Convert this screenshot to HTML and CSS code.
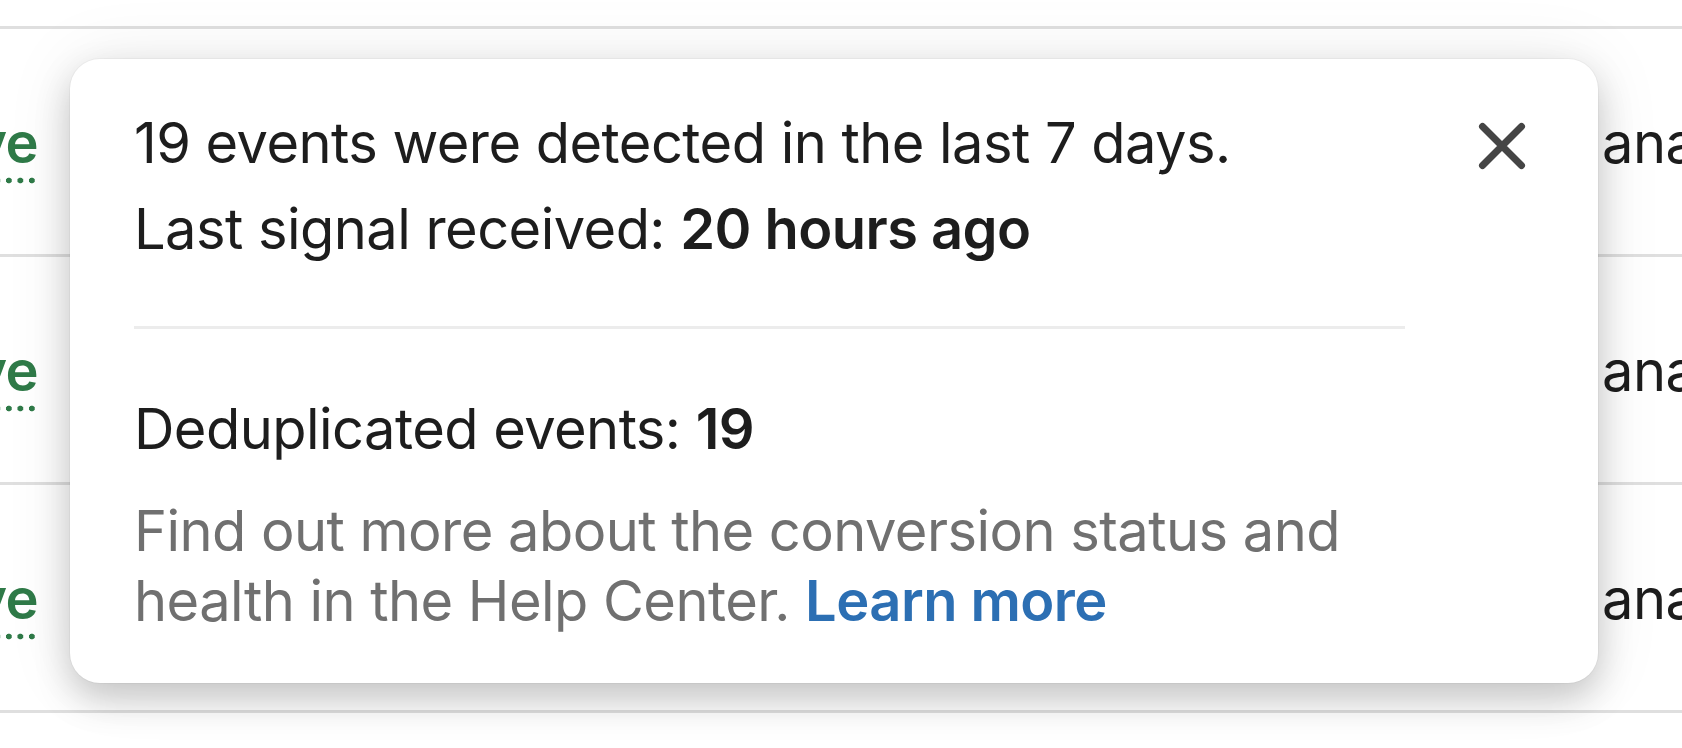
FILE: index.html
```html
<!DOCTYPE html>
<html lang="en">
<head>
    <meta charset="UTF-8">
    <meta name="viewport" content="width=device-width, initial-scale=1.0">
    <title>Conversion status</title>
    <link rel="stylesheet" href="styles.css">
</head>
<body>
    <div class="table">
        <div class="row">
            <div class="cell status"><span class="status-label">Active</span></div>
            <div class="cell spacer"></div>
            <div class="cell name">analytics</div>
        </div>
        <div class="row">
            <div class="cell status"><span class="status-label">Active</span></div>
            <div class="cell spacer"></div>
            <div class="cell name">analytics</div>
        </div>
        <div class="row">
            <div class="cell status"><span class="status-label">Active</span></div>
            <div class="cell spacer"></div>
            <div class="cell name">analytics</div>
        </div>
    </div>

    <!-- status popover, sits over the table -->
    <div class="popover">
        <div class="popover-body">
            <p class="line">19 events were detected in the last 7 days.</p>
            <p class="line line-signal">Last signal received: <strong>20 hours ago</strong></p>
            <hr class="divider">
            <p class="line line-dedup">Deduplicated events: <strong>19</strong></p>
            <p class="help">Find out more about the conversion status and health in the Help Center. <a href="#" class="learn-more">Learn more</a></p>
        </div>
        <button class="close-btn" aria-label="Close">
            <svg width="48" height="48" viewBox="0 0 48 48">
                <path d="M4.5 4.5 L43.5 43.5 M43.5 4.5 L4.5 43.5" stroke="#454545" stroke-width="7" stroke-linecap="round" fill="none"/>
            </svg>
        </button>
    </div>
</body>
</html>
```

FILE: styles.css
```css
body {
    margin: 0;
    padding: 0;
    background: #fff;
    font-family: Inter, "Noto Sans", sans-serif;
    font-size: 56px;
    letter-spacing: -0.55px;
    color: #1d1d1d;
    width: 1682px;
    height: 748px;
    overflow: hidden;
    position: relative;
}

/* Table behind the popover */
.table {
    padding-top: 26px;
}

.row {
    display: flex;
    align-items: flex-start;
    height: 225px;
    border-top: 3px solid #dfdfdf;
}

.row:last-child {
    border-bottom: 3px solid #dfdfdf;
}

.cell {
    padding-top: 79px;
    line-height: 70px;
    white-space: nowrap;
    overflow: hidden;
}

.status {
    width: 38px;
    padding-top: 86px;
    line-height: 56px;
    display: flex;
    justify-content: flex-end;
}

.status-label {
    display: block;
    color: #2f7a48;
    font-weight: 600;
    padding-bottom: 13px;
    background-image: radial-gradient(circle, #2f7a48 2.6px, transparent 3.2px);
    background-size: 11.5px 7px;
    background-repeat: repeat-x;
    background-position: right 0 bottom 0;
}

.spacer {
    flex: 1;
}

.name {
    width: 80px;
    color: #1d1d1d;
}

/* Popover */
.popover {
    position: absolute;
    left: 70px;
    top: 59px;
    width: 1528px;
    box-sizing: border-box;
    padding: 49px 72px 47px 64px;
    background: #fff;
    border-radius: 30px;
    box-shadow: 0 0 0 1px rgba(0, 0, 0, 0.03), 0 16px 36px rgba(0, 0, 0, 0.2), 0 0 70px rgba(0, 0, 0, 0.08);
    display: flex;
    gap: 73px;
}

.popover-body {
    flex: 1;
}

.line {
    margin: 0;
    line-height: 70px;
}

.line strong {
    font-weight: 600;
}

.line-signal {
    margin-top: 16px;
}

.divider {
    margin: 62px 0 0;
    border: none;
    height: 3px;
    background: #ececec;
}

.line-dedup {
    margin-top: 65px;
}

.help {
    margin: 32px 0 0;
    line-height: 70px;
    color: #707070;
}

.learn-more {
    color: #2c6fb3;
    font-weight: 600;
    text-decoration: none;
}

.close-btn {
    width: 48px;
    height: 48px;
    margin-top: 14px;
    padding: 0;
    border: none;
    background: none;
    cursor: pointer;
    flex-shrink: 0;
}

.close-btn svg {
    display: block;
}
```
